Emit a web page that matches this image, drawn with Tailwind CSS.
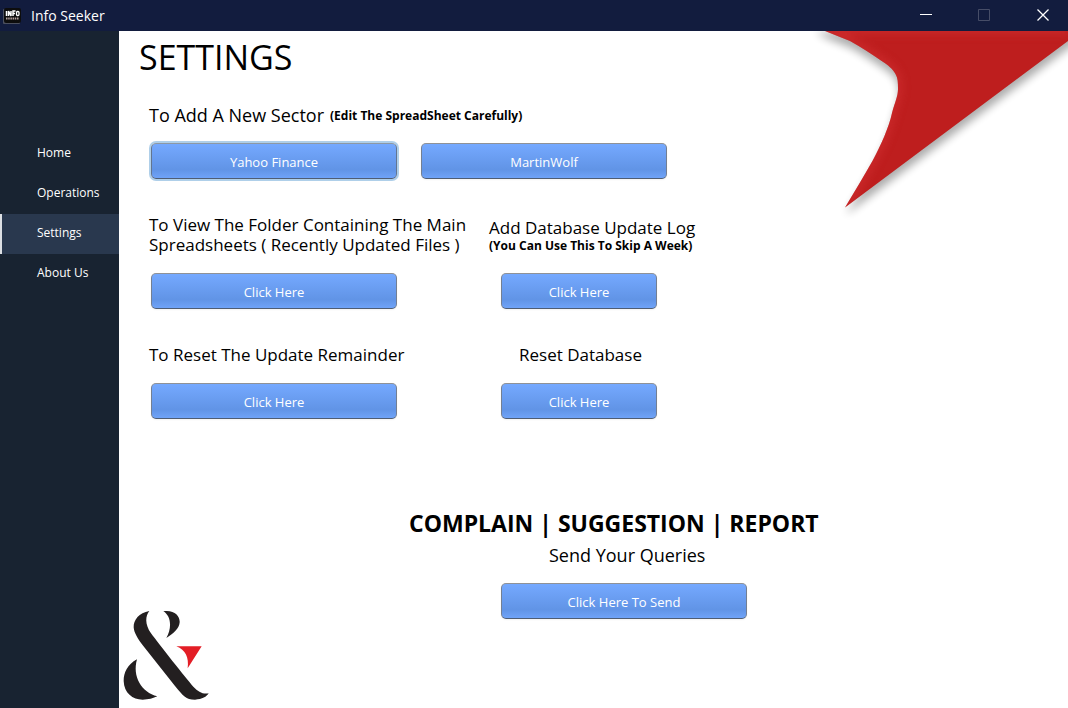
<!DOCTYPE html>
<html lang="en">
<head>
<meta charset="utf-8">
<meta name="viewport" content="width=device-width, initial-scale=1">
<title>Info Seeker</title>
<script src="https://cdn.jsdelivr.net/npm/@tailwindcss/browser@4"></script>
</head>
<body class="flex min-h-screen flex-col bg-white font-['Open_Sans','Noto_Sans',sans-serif] text-black">
  <header class="flex h-[31px] items-center bg-[#121c3e] text-white">
    <svg class="ml-[3px] h-4 w-[18px]" viewBox="0 0 18 16" aria-hidden="true">
      <rect y="1" width="17" height="15" rx="1" fill="#4b4f5e"/>
      <rect x="1" width="17" height="15" rx="2" fill="#0d0d0d"/>
      <path d="M3.500 3v5M5.500 8V3l2.500 5V3M10 8V3h2.500M10 5.500h2" stroke="#fff" stroke-width="1.500" fill="none"/>
      <rect x="13.500" y="3.500" width="2.500" height="4" rx="1" stroke="#fff" stroke-width="1.300" fill="none"/>
      <path d="M3 10.500h13" stroke="#b8a4a0" stroke-width="2" stroke-dasharray="1.500 .7"/>
    </svg>
    <span class="ml-[10px] text-sm">Info Seeker</span>
    <div class="ml-auto flex h-full pb-px">
      <button type="button" aria-label="Minimize" class="flex w-[58px] items-center justify-center">
        <svg class="h-3 w-3" viewBox="0 0 12 12"><path d="M0 5.500h12" stroke="#fff"/></svg>
      </button>
      <button type="button" aria-label="Maximize" disabled class="flex w-[58px] items-center justify-center">
        <svg class="h-3 w-3" viewBox="0 0 12 12"><path d="M.5.5h11v11H.5z" fill="none" stroke="#464d67"/></svg>
      </button>
      <button type="button" aria-label="Close" class="mr-[-5px] flex w-[60px] items-center justify-center">
        <svg class="h-3 w-3" viewBox="0 0 12 12"><path d="M.5.5l11 11M11.500.5l-11 11" stroke="#fff" stroke-width="1.300"/></svg>
      </button>
    </div>
  </header>
  <div class="flex flex-1">
    <nav class="w-[119px] shrink-0 bg-[#182331] pt-[103px] text-xs text-white">
      <a href="#home" class="flex h-10 items-center pb-[2px] pl-[37px]">Home</a>
      <a href="#operations" class="flex h-10 items-center pb-[2px] pl-[37px]">Operations</a>
      <a href="#settings" aria-current="page" class="flex h-10 items-center border-l-2 border-[#dcdfe3] bg-[#29384e] pb-[2px] pl-[35px]">Settings</a>
      <a href="#about" class="flex h-10 items-center pb-[2px] pl-[37px]">About Us</a>
    </nav>
    <main class="relative flex min-w-0 flex-1 flex-col overflow-hidden">
      <svg class="absolute top-0 right-0 h-[190px] w-[258px]" viewBox="0 0 258 190" aria-hidden="true">
        <defs>
          <filter id="shade" x="-10%" y="-10%" width="120%" height="120%"><feGaussianBlur stdDeviation="4"/></filter>
          <clipPath id="wing"><path d="M15 0L40 10C52 17 62 23 71.700 30C78 34 83 38 85.500 43C88 47 88 52 88 58C88 65 85 71 82 82C79 96 71 114 63 129C54 145 45 160 35 176.500L258 10V0Z"/></clipPath>
        </defs>
        <path d="M5 -6L15 0L40 10C52 17 62 23 71.700 30C78 34 83 38 85.500 43C88 47 88 52 88 58C88 65 85 71 82 82C79 96 71 114 63 129C54 145 45 160 35 176.500L270 1V-6Z" transform="translate(1 7)" fill="#000" opacity=".32" filter="url(#shade)"/>
        <g clip-path="url(#wing)">
          <path d="M0 0h258v190H0z" fill="#be1e1e"/>
          <path d="M258 -1H15L40 10C52 17 62 23 71.700 30C78 34 83 38 85.500 43C88 47 88 52 88 58C88 65 85 71 82 82C79 96 71 114 63 129C54 145 45 160 35 176.500" fill="none" stroke="#d83438" stroke-width="8" opacity=".5" filter="url(#shade)"/>
        </g>
      </svg>
      <h1 class="pt-1 pl-5 text-[34px] leading-[44px]">SETTINGS</h1>

      <section class="pt-6 pl-[30px]">
        <h2 class="flex h-6 items-center gap-1.5 text-lg">To Add A New Sector <small class="pt-[2px] text-xs font-bold">(Edit The SpreadSheet Carefully)</small></h2>
        <div class="mt-4 ml-[2px] flex gap-6">
          <button type="button" class="h-9 w-[246px] rounded-[5px] border border-t-[#8d98a4] border-x-[#63758f] border-b-[#4f5d73] bg-linear-to-b from-[#75a9ff] via-[#6194e6] via-75% to-[#6fa3f8] pt-[3px] text-[13px] text-white ring-2 ring-[#8dbbe0]/70">Yahoo Finance</button>
          <button type="button" class="h-9 w-[246px] rounded-[5px] border border-t-[#8f9297] border-x-[#737f92] border-b-[#4f5d73] bg-linear-to-b from-[#75a9ff] via-[#6194e6] via-75% to-[#6fa3f8] pt-[3px] text-[13px] text-white shadow-xs">MartinWolf</button>
        </div>
      </section>

      <div class="grid grid-cols-[340px_220px] pt-9 pl-[30px]">
        <section>
          <h2 class="h-[58px] text-[17px] leading-5">To View The Folder Containing The Main<br>Spreadsheets ( Recently Updated Files )</h2>
          <button type="button" class="ml-[2px] h-9 w-[246px] rounded-[5px] border border-t-[#8f9297] border-x-[#737f92] border-b-[#4f5d73] bg-linear-to-b from-[#75a9ff] via-[#6194e6] via-75% to-[#6fa3f8] pt-[3px] text-[13px] text-white shadow-xs">Click Here</button>
        </section>
        <section>
          <h2 class="h-[58px] pt-[3px] text-[17px] leading-5">Add Database Update Log<small class="block text-xs leading-4 font-bold">(You Can Use This To Skip A Week)</small></h2>
          <button type="button" class="ml-3 h-9 w-[156px] rounded-[5px] border border-t-[#8f9297] border-x-[#737f92] border-b-[#4f5d73] bg-linear-to-b from-[#75a9ff] via-[#6194e6] via-75% to-[#6fa3f8] pt-[3px] text-[13px] text-white shadow-xs">Click Here</button>
        </section>
        <section class="pt-9">
          <h2 class="h-[38px] text-[17px] leading-5">To Reset The Update Remainder</h2>
          <button type="button" class="ml-[2px] h-9 w-[246px] rounded-[5px] border border-t-[#8f9297] border-x-[#737f92] border-b-[#4f5d73] bg-linear-to-b from-[#75a9ff] via-[#6194e6] via-75% to-[#6fa3f8] pt-[3px] text-[13px] text-white shadow-xs">Click Here</button>
        </section>
        <section class="pt-9">
          <h2 class="h-[38px] pl-[30px] text-[17px] leading-5">Reset Database</h2>
          <button type="button" class="ml-3 h-9 w-[156px] rounded-[5px] border border-t-[#8f9297] border-x-[#737f92] border-b-[#4f5d73] bg-linear-to-b from-[#75a9ff] via-[#6194e6] via-75% to-[#6fa3f8] pt-[3px] text-[13px] text-white shadow-xs">Click Here</button>
        </section>
      </div>

      <div class="flex flex-1 items-end justify-start pt-[88px]">
        <svg class="mb-1.5 ml-1 h-[92px] w-[87px] shrink-0" viewBox="24 30 261 276" role="img" aria-label="Ampersand logo">
          <g fill="#231f20">
            <path d="M103 33C72 38 55 60 56 82C57 98 68 116 85 138L180 258C205 288 212 299 240 299C262 298 275 290 281 280C262 283 250 275 235 260C215 238 130 130 108 100C89 72 91 48 103 33Z"/>
            <path d="M145 34C178 29 195 48 194 67C193 86 175 101 154 114C171 84 169 48 145 34Z"/>
            <path d="M66 178C37 194 26 218 26 243C27 279 53 299 83 299C100 299 115 295 127 289C80 278 51 230 66 178Z"/>
          </g>
          <path d="M184 139H260L218 205C222 172 212 150 184 139Z" fill="#e31e26"/>
        </svg>
        <section class="ml-[199px] self-start">
          <h2 class="text-[23px] leading-8 font-bold whitespace-nowrap">COMPLAIN | SUGGESTION | REPORT</h2>
          <p class="pl-[140px] text-lg leading-8">Send Your Queries</p>
          <button type="button" class="mt-3 ml-[92px] h-9 w-[246px] rounded-[5px] border border-t-[#8f9297] border-x-[#737f92] border-b-[#4f5d73] bg-linear-to-b from-[#75a9ff] via-[#6194e6] via-75% to-[#6fa3f8] pt-[3px] text-[13px] text-white shadow-xs">Click Here To Send</button>
        </section>
      </div>
    </main>
  </div>
</body>
</html>
